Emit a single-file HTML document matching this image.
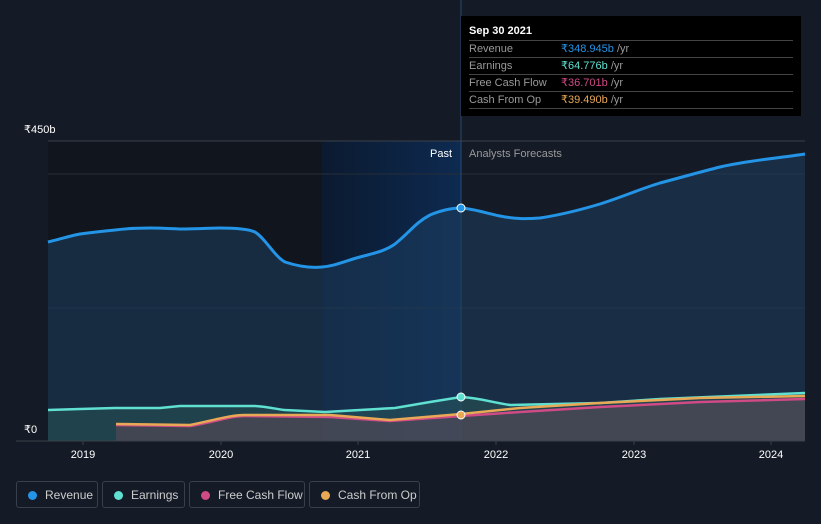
<!DOCTYPE html>
<html><head><meta charset="utf-8"><style>
body{margin:0;background:#151b26;width:821px;height:524px;overflow:hidden;font-family:"Liberation Sans",sans-serif}
.tip{position:absolute;left:461px;top:16px;width:340px;height:100px;background:#000;color:#fff;font-size:11px}
.tip .h{position:absolute;left:8px;top:9px;font-weight:bold;font-size:11px}
.row{position:absolute;left:8px;width:324px;border-top:1px solid #444;height:16px;line-height:17px;color:#999}
.row span{position:absolute;left:92px}
.leg{position:absolute;top:481px;height:27px;border:1px solid #3a404b;border-radius:3px;color:#ccc;font-size:12px;line-height:27px;box-sizing:border-box}
.leg i{position:absolute;left:11px;top:9px;width:9px;height:9px;border-radius:50%}
.leg b{font-weight:normal;position:absolute;left:28px}
</style></head><body>
<svg width="821" height="524" style="position:absolute;left:0;top:0">
<defs>
<linearGradient id="hl" x1="0" x2="1"><stop offset="0" stop-color="#0c1a30"/><stop offset="1" stop-color="#0d2a50"/></linearGradient>
</defs>
<rect x="48" y="141" width="274" height="300" fill="#11151d"/>
<rect x="322" y="141" width="139" height="300" fill="url(#hl)"/>
<line x1="48" y1="141" x2="805" y2="141" stroke="#3a404b"/>
<line x1="48" y1="174" x2="805" y2="174" stroke="#262d38"/>
<line x1="48" y1="308" x2="805" y2="308" stroke="#262d38"/>
<line x1="461" y1="0" x2="461" y2="441" stroke="#2a4a70"/>
<path d="M48,242 C60,239 70,236 80,234 C95,232 105,231 115,230 C130,228 140,228 150,228 C165,228 175,229 185,229 C200,229 210,228 220,228 C235,228 248,229 255,232 C265,238 275,257 285,262 C300,267 312,268 322,267 C335,266 345,261 360,257 C375,253 385,251 395,244 C410,232 415,223 430,215 C442,210 452,208 461,208 C475,209 485,213 500,216 C515,219 525,219 540,218 C560,215 580,210 600,204 C625,196 640,189 660,183 C690,175 700,172 720,167 C750,160 780,158 805,154 L805,441 L48,441Z" fill="#1d3e5e" fill-opacity="0.55" stroke="none"/>
<path d="M48,242 C60,239 70,236 80,234 C95,232 105,231 115,230 C130,228 140,228 150,228 C165,228 175,229 185,229 C200,229 210,228 220,228 C235,228 248,229 255,232 C265,238 275,257 285,262 C300,267 312,268 322,267 C335,266 345,261 360,257 C375,253 385,251 395,244 C410,232 415,223 430,215 C442,210 452,208 461,208 C475,209 485,213 500,216 C515,219 525,219 540,218 C560,215 580,210 600,204 C625,196 640,189 660,183 C690,175 700,172 720,167 C750,160 780,158 805,154" fill="none" stroke="#2394e6" stroke-width="3"/>
<path d="M48,410 L80,409 L115,408 L160,408 L180,406 L255,406 C270,407 275,409 285,410 L325,412 L360,410 L395,408 L430,402 L461,397 C480,398 490,402 510,405 L600,403 L660,399 L805,393 L805,441 L48,441Z" fill="#2a5a5a" fill-opacity="0.5"/>
<path d="M48,410 L80,409 L115,408 L160,408 L180,406 L255,406 C270,407 275,409 285,410 L325,412 L360,410 L395,408 L430,402 L461,397 C480,398 490,402 510,405 L600,403 L660,399 L805,393" fill="none" stroke="#5fe0d0" stroke-width="2.5"/>
<path d="M116,425 L190,426 C215,422 230,416 245,416 L330,417 L390,421 L461,416 L520,412 L600,407 L700,402 L805,399 L805,441 L116,441Z" fill="#5a4a58" fill-opacity="0.6"/>
<path d="M116,425 L190,426 C215,422 230,416 245,416 L330,417 L390,421 L461,416 L520,412 L600,407 L700,402 L805,399" fill="none" stroke="#d04a86" stroke-width="2.5"/>
<path d="M116,424 L190,425 C215,420 230,415 245,415 L330,415 L390,420 L461,414 L520,408 L600,403 L700,398 L805,396" fill="none" stroke="#e8a855" stroke-width="2.5"/>
<line x1="16" y1="441" x2="805" y2="441" stroke="#3a404b"/>
<circle cx="461" cy="208" r="4" fill="#2394e6" stroke="#fff" stroke-width="1"/>
<circle cx="461" cy="397" r="4" fill="#5fe0d0" stroke="#fff" stroke-width="1"/>
<circle cx="461" cy="415" r="4" fill="#e8a855" stroke="#fff" stroke-width="1"/>
<g fill="#fff" font-size="11"><text x="24" y="133">₹450b</text><text x="24" y="433">₹0</text>
<text x="430" y="157">Past</text><text x="469" y="157" fill="#999">Analysts Forecasts</text>
<g text-anchor="middle"><text x="83" y="458">2019</text><text x="221" y="458">2020</text><text x="358" y="458">2021</text><text x="496" y="458">2022</text><text x="634" y="458">2023</text><text x="771" y="458">2024</text></g></g>
<g stroke="#3a404b"><line x1="83" y1="441" x2="83" y2="445"/><line x1="221" y1="441" x2="221" y2="445"/><line x1="358" y1="441" x2="358" y2="445"/><line x1="496" y1="441" x2="496" y2="445"/><line x1="634" y1="441" x2="634" y2="445"/><line x1="771" y1="441" x2="771" y2="445"/></g>
</svg>
<div class="tip"><div class="h">Sep 30 2021</div>
<div class="row" style="top:24px">Revenue<span><i style="font-style:normal;color:#2394e6">₹348.945b</i> /yr</span></div>
<div class="row" style="top:41px">Earnings<span><i style="font-style:normal;color:#5fe0d0">₹64.776b</i> /yr</span></div>
<div class="row" style="top:58px">Free Cash Flow<span><i style="font-style:normal;color:#d04a86">₹36.701b</i> /yr</span></div>
<div class="row" style="top:75px">Cash From Op<span><i style="font-style:normal;color:#e8a855">₹39.490b</i> /yr</span></div>
<div class="row" style="top:92px;height:0"></div>
</div>
<div class="leg" style="left:16px;width:82px"><i style="background:#2394e6"></i><b>Revenue</b></div>
<div class="leg" style="left:102px;width:83px"><i style="background:#5fe0d0"></i><b>Earnings</b></div>
<div class="leg" style="left:189px;width:116px"><i style="background:#d04a86"></i><b>Free Cash Flow</b></div>
<div class="leg" style="left:309px;width:111px"><i style="background:#e8a855"></i><b>Cash From Op</b></div>
</body></html>
